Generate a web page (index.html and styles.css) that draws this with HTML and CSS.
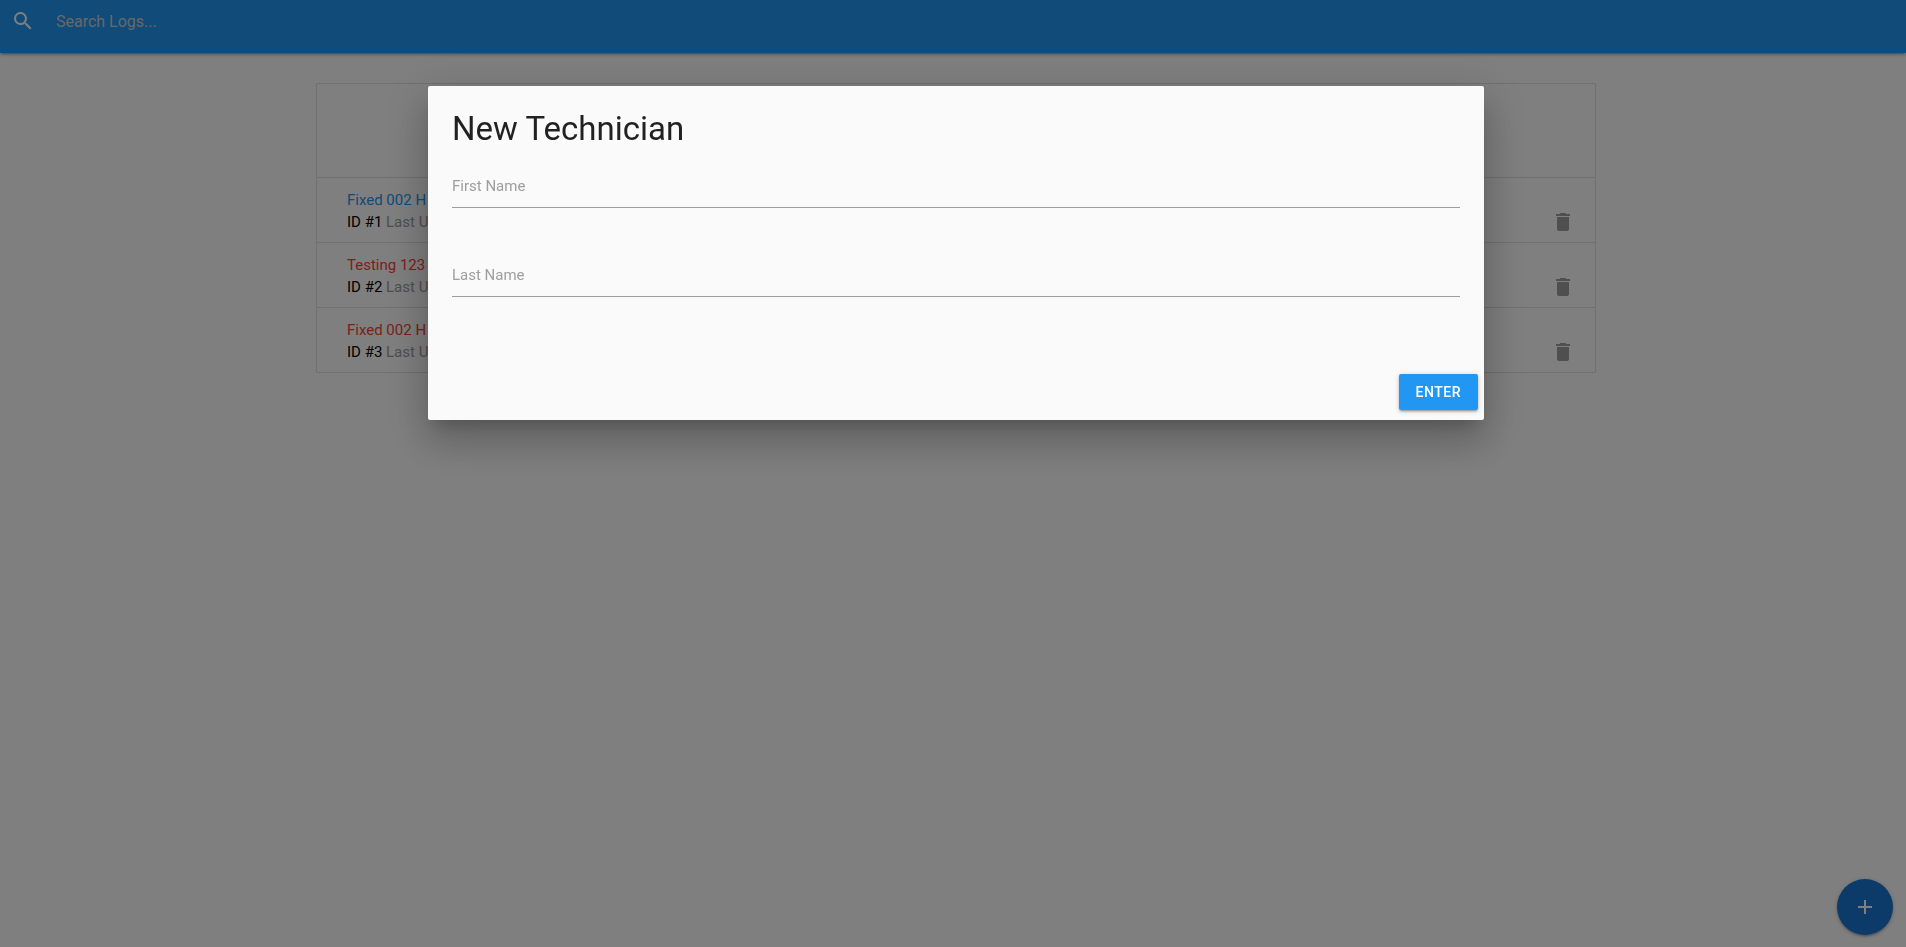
FILE: index.html
```html
<!DOCTYPE html>
<html lang="en">
<head>
  <meta charset="UTF-8">
  <meta name="viewport" content="width=device-width, initial-scale=1.0">
  <title>IT Logger</title>
  <link rel="stylesheet" href="styles.css">
</head>
<body>
  <nav class="navbar">
    <form class="search">
      <label class="search-icon" for="search" aria-label="Search Logs">
        <svg class="icon" viewBox="0 0 24 24"><path d="M15.5 14h-.79l-.28-.27A6.471 6.471 0 0 0 16 9.5 6.5 6.5 0 1 0 9.5 16c1.61 0 3.09-.59 4.23-1.57l.27.28v.79l5 4.99L20.49 19l-4.99-5zm-6 0C7.01 14 5 11.99 5 9.5S7.01 5 9.5 5 14 7.01 14 9.5 11.99 14 9.5 14z"/></svg>
      </label>
      <input class="search-input" id="search" type="search" placeholder="Search Logs...">
    </form>
  </nav>

  <main class="container">
    <ul class="collection">
      <li class="collection-header"></li>
      <li class="collection-item">
        <div>
          <a href="#edit-log" class="log-message blue-text">Fixed 002 H</a>
          <div class="log-info"><span class="log-id">ID #1</span> Last U</div>
        </div>
        <a href="#delete" class="secondary-content" aria-label="Delete log 1">
          <svg class="icon" viewBox="0 0 24 24"><path d="M6 19c0 1.1.9 2 2 2h8c1.1 0 2-.9 2-2V7H6v12zM19 4h-3.500l-1-1h-5l-1 1H5v2h14V4z"/></svg>
        </a>
      </li>
      <li class="collection-item">
        <div>
          <a href="#edit-log" class="log-message red-text">Testing 123</a>
          <div class="log-info"><span class="log-id">ID #2</span> Last U</div>
        </div>
        <a href="#delete" class="secondary-content" aria-label="Delete log 2">
          <svg class="icon" viewBox="0 0 24 24"><path d="M6 19c0 1.1.9 2 2 2h8c1.1 0 2-.9 2-2V7H6v12zM19 4h-3.500l-1-1h-5l-1 1H5v2h14V4z"/></svg>
        </a>
      </li>
      <li class="collection-item">
        <div>
          <a href="#edit-log" class="log-message red-text">Fixed 002 H</a>
          <div class="log-info"><span class="log-id">ID #3</span> Last U</div>
        </div>
        <a href="#delete" class="secondary-content" aria-label="Delete log 3">
          <svg class="icon" viewBox="0 0 24 24"><path d="M6 19c0 1.1.9 2 2 2h8c1.1 0 2-.9 2-2V7H6v12zM19 4h-3.500l-1-1h-5l-1 1H5v2h14V4z"/></svg>
        </a>
      </li>
    </ul>
  </main>

  <a href="#add-log" class="fab" aria-label="Add">
    <svg class="icon" viewBox="0 0 24 24"><path d="M19 13h-6v6h-2v-6H5v-2h6V5h2v6h6v2z"/></svg>
  </a>

  <div class="modal-overlay">
    <div class="modal" role="dialog" aria-labelledby="modal-title">
      <div class="modal-content">
        <h4 class="modal-title" id="modal-title">New Technician</h4>
        <div class="input-field">
          <input type="text" id="firstName" name="firstName">
          <label for="firstName">First Name</label>
        </div>
        <div class="input-field">
          <input type="text" id="lastName" name="lastName">
          <label for="lastName">Last Name</label>
        </div>
      </div>
      <div class="modal-footer">
        <button type="button" class="btn">Enter</button>
      </div>
    </div>
  </div>
</body>
</html>
```
FILE: styles.css
```css
* {
  box-sizing: border-box;
}

body {
  margin: 0;
  min-height: 100vh;
  background: #fff;
  color: rgba(0, 0, 0, 0.87);
  font-family: Roboto, "Liberation Sans", sans-serif;
  font-size: 15px;
  line-height: 22px;
}

a {
  text-decoration: none;
}

.icon {
  display: block;
  width: 24px;
  height: 24px;
  fill: currentColor;
}

/* Navbar */
.navbar {
  height: 53px;
  background: #2196f3;
  color: #fff;
  box-shadow: 0 2px 2px 0 rgba(0, 0, 0, 0.14), 0 3px 1px -2px rgba(0, 0, 0, 0.12), 0 1px 5px 0 rgba(0, 0, 0, 0.2);
}

.search {
  display: flex;
  align-items: center;
  gap: 21px;
  padding: 9px 11px;
}

.search-input {
  flex: 1;
  height: 24px;
  padding: 0;
  border: none;
  outline: none;
  background: transparent;
  color: #fff;
  font-family: inherit;
  font-size: 16px;
}

.search-input::placeholder {
  color: #d1d1d1;
}

/* Log list */
.container {
  padding: 30px 20px 0 26px;
}

.collection {
  max-width: 1280px;
  margin: 0 auto;
  padding: 0;
  border: 1px solid #e0e0e0;
  border-radius: 2px;
  list-style: none;
}

.collection-header {
  height: 94px;
  border-bottom: 1px solid #e0e0e0;
}

.collection-item {
  display: flex;
  align-items: flex-end;
  justify-content: space-between;
  padding: 11px 20px 9px 30px;
  border-bottom: 1px solid #e0e0e0;
}

.collection-item:last-child {
  border-bottom: none;
}

.log-message {
  display: block;
}

.log-info,
.secondary-content {
  color: #9e9e9e;
}

.secondary-content {
  height: 23px;
}

.log-id {
  color: #000;
}

.blue-text {
  color: #2196f3;
}

.red-text {
  color: #f44336;
}

/* Floating action button */
.fab {
  position: fixed;
  right: 13px;
  bottom: 12px;
  display: flex;
  align-items: center;
  justify-content: center;
  width: 56px;
  height: 56px;
  border-radius: 50%;
  background: #1976d2;
  color: #fff;
  box-shadow: 0 2px 2px 0 rgba(0, 0, 0, 0.14), 0 3px 1px -2px rgba(0, 0, 0, 0.12), 0 1px 5px 0 rgba(0, 0, 0, 0.2);
}

/* Modal */
.modal-overlay {
  position: fixed;
  inset: 0;
  padding: 86px 0 0 6px;
  background: rgba(0, 0, 0, 0.5);
}

.modal {
  width: 1056px;
  max-width: 90%;
  margin: 0 auto;
  border-radius: 2px;
  background: #fafafa;
  box-shadow: 0 24px 38px 3px rgba(0, 0, 0, 0.14), 0 9px 46px 8px rgba(0, 0, 0, 0.12), 0 11px 15px -7px rgba(0, 0, 0, 0.2);
}

.modal-content {
  padding: 24px;
}

.modal-title {
  margin: 0 0 14px;
  font-size: 33px;
  font-weight: 400;
  line-height: 38px;
}

.input-field {
  position: relative;
  margin-bottom: 43px;
}

.input-field input {
  display: block;
  width: 100%;
  height: 46px;
  padding: 0;
  border: none;
  border-bottom: 1px solid #9e9e9e;
  outline: none;
  background: transparent;
  font-family: inherit;
  font-size: 16px;
}

.input-field label {
  position: absolute;
  top: 13px;
  left: 0;
  color: #9e9e9e;
  cursor: text;
}

.modal-footer {
  display: flex;
  justify-content: flex-end;
  padding: 10px 6px;
}

.btn {
  height: 36px;
  padding: 0 17px;
  border: none;
  border-radius: 2px;
  background: #2196f3;
  color: #fff;
  font-family: inherit;
  font-size: 14px;
  font-weight: 500;
  text-transform: uppercase;
  letter-spacing: 0.5px;
  cursor: pointer;
  box-shadow: 0 2px 2px 0 rgba(0, 0, 0, 0.14), 0 3px 1px -2px rgba(0, 0, 0, 0.12), 0 1px 5px 0 rgba(0, 0, 0, 0.2);
}
```
